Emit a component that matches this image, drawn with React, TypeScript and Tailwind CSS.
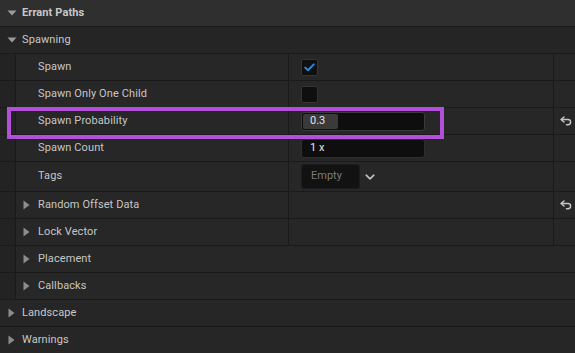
import React from "react";

const SEP = "border-b border-[#1a1a1a]";

function TriDown() {
  return (
    <svg width="10" height="6" viewBox="0 0 10 6" className="shrink-0">
      <path d="M0.5 0.5 L9.5 0.5 L5 5.5 Z" fill="#9a9a9a" />
    </svg>
  );
}

function TriRight() {
  return (
    <svg width="7" height="10" viewBox="0 0 7 10" className="shrink-0">
      <path d="M0.5 0.5 L6.5 5 L0.5 9.5 Z" fill="#8c8c8c" />
    </svg>
  );
}

function ResetIcon() {
  return (
    <svg width="12" height="10" viewBox="0 0 12 10">
      <path
        d="M4 1 L1 3.5 L4 6 M1.5 3.5 H8 a2.6 2.6 0 0 1 0 5.2 H6.5"
        fill="none"
        stroke="#c4c4c4"
        strokeWidth="1.5"
        strokeLinecap="round"
        strokeLinejoin="round"
      />
    </svg>
  );
}

function Category({ label, open, bold, bg }: { label: string; open: boolean; bold?: boolean; bg: string }) {
  return (
    <div className={`flex items-center h-[27px] shrink-0 ${SEP} ${bg}`}>
      <div className="w-[22px] flex justify-center pl-[1px]">{open ? <TriDown /> : <TriRight />}</div>
      <span className={`text-[11px] tracking-[0.1px] text-[#c8c8c8] ${bold ? "font-bold" : ""}`}>{label}</span>
    </div>
  );
}

function ItemRow({
  label,
  sub,
  value,
  reset,
  columns = true,
  h = "h-[27px]",
}: {
  label: string;
  sub?: boolean;
  value?: React.ReactNode;
  reset?: boolean;
  columns?: boolean;
  h?: string;
}) {
  return (
    <div className={`flex ${h} shrink-0 ${SEP} bg-[#272727]`}>
      <div className="w-[16px] bg-[#232323] border-r border-[#1a1a1a]" />
      <div className={`flex items-center ${columns ? "w-[273px] border-r border-[#1a1a1a]" : "flex-1"}`}>
        <div className="w-[22px] flex justify-start pl-[7px]">{sub ? <TriRight /> : null}</div>
        <span className="text-[11px] tracking-[0.1px] text-[#c6c6c6]">{label}</span>
      </div>
      {columns && (
        <>
          <div className="w-[265px] border-r border-[#1a1a1a] flex items-center pl-[12px]">{value}</div>
          <div className="w-[21px] flex items-center justify-center pl-[3px]">{reset ? <ResetIcon /> : null}</div>
        </>
      )}
    </div>
  );
}

export default function App() {
  return (
    <div
      className="relative w-[575px] h-[353px] overflow-hidden bg-[#262626] flex flex-col"
      style={{ fontFamily: "Roboto, 'Liberation Sans', sans-serif" }}
    >
      <Category label="Errant Paths" open bold bg="bg-[#2f2f2f]" />
      <Category label="Spawning" open bg="bg-[#252525]" />
      <ItemRow
        label="Spawn"
        value={
          <div className="w-[17px] h-[17px] rounded-[2px] bg-[#0f0f0f] border border-[#353535] flex items-center justify-center">
            <svg width="11" height="9" viewBox="0 0 11 9">
              <path d="M1.2 4.6 L4 7.3 L9.8 1.4" fill="none" stroke="#2f86dc" strokeWidth="2" strokeLinecap="round" strokeLinejoin="round" />
            </svg>
          </div>
        }
      />
      <ItemRow
        label="Spawn Only One Child"
        value={<div className="w-[17px] h-[17px] rounded-[2px] bg-[#0f0f0f] border border-[#353535]" />}
      />
      <ItemRow
        label="Spawn Probability"
        reset
        value={
          <div className="w-[124px] h-[19px] rounded-[3px] bg-[#0e0e0e] border border-[#3a3a3a] p-[1px] flex">
            <div className="w-[35px] h-full rounded-[2px] bg-[#3a3a3a] flex items-center pl-[7px]">
              <span className="text-[11px] text-[#e2e2e2]">0.3</span>
            </div>
          </div>
        }
      />
      <ItemRow
        label="Spawn Count"
        value={
          <div className="w-[124px] h-[19px] rounded-[3px] bg-[#0e0e0e] border border-[#2e2e2e] flex items-center pl-[8px]">
            <span className="text-[11px] text-[#e6e6e6]">1 x</span>
          </div>
        }
      />
      <ItemRow
        label="Tags"
        h="h-[30px]"
        value={
          <div className="flex items-center">
            <div className="w-[59px] h-[25px] rounded-[3px] bg-[#121212] border border-[#1c1c1c] flex items-center pl-[9px]">
              <span className="text-[11px] text-[#7a7a7a]">Empty</span>
            </div>
            <svg width="10" height="6" viewBox="0 0 10 6" className="ml-[5px]">
              <path d="M1.2 1.2 L5 4.8 L8.8 1.2" fill="none" stroke="#c4c4c4" strokeWidth="1.6" strokeLinecap="round" strokeLinejoin="round" />
            </svg>
          </div>
        }
      />
      <ItemRow label="Random Offset Data" sub reset />
      <ItemRow label="Lock Vector" sub />
      <ItemRow label="Placement" sub columns={false} />
      <ItemRow label="Callbacks" sub columns={false} />
      <Category label="Landscape" open={false} bg="bg-[#262626]" />
      <Category label="Warnings" open={false} bg="bg-[#262626]" />

      <div className="absolute left-[7px] top-[107px] w-[437px] h-[32px] border-4 border-[#b44fdc] pointer-events-none" />
    </div>
  );
}
